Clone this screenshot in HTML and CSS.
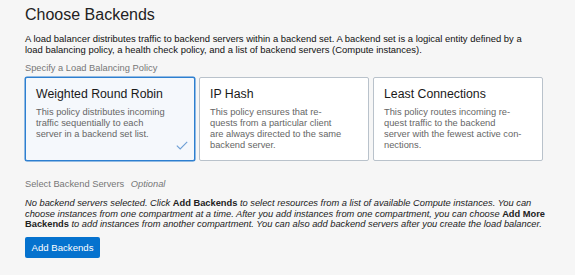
FILE: index.html
```html
<!DOCTYPE html>
<html>
<head>
<meta charset="utf-8">
<link rel="stylesheet" href="styles.css">
</head>
<body>
<div class="page">
  <h1 class="title">Choose Backends</h1>
  <p class="intro">A load balancer distributes traffic to backend servers within a backend set. A backend set is a logical entity defined by a load balancing policy, a health check policy, and a list of backend servers (Compute instances).</p>
  <div class="label">Specify a Load Balancing Policy</div>
  <div class="cards">
    <div class="card selected">
      <div class="card-title">Weighted Round Robin</div>
      <div class="card-text">This policy distributes incoming<br>traffic sequentially to each<br>server in a backend set list.</div>
      <svg class="check" width="12" height="9" viewBox="0 0 12 9"><path d="M0.8 4.6 L4.2 8 L11.2 0.8" fill="none" stroke="#6d9fd6" stroke-width="1.1"/></svg>
    </div>
    <div class="card">
      <div class="card-title">IP Hash</div>
      <div class="card-text">This policy ensures that re-<br>quests from a particular client<br>are always directed to the same<br>backend server.</div>
    </div>
    <div class="card">
      <div class="card-title">Least Connections</div>
      <div class="card-text">This policy routes incoming re-<br>quest traffic to the backend<br>server with the fewest active con-<br>nections.</div>
    </div>
  </div>
  <div class="label2">Select Backend Servers <em class="opt">Optional</em></div>
  <p class="note">No backend servers selected. Click <b>Add Backends</b> to select resources from a list of available Compute instances. You can choose instances from one compartment at a time. After you add instances from one compartment, you can choose <b>Add More Backends</b> to add instances from another compartment. You can also add backend servers after you create the load balancer.</p>
  <button class="btn">Add Backends</button>
</div>
</body>
</html>
```

FILE: styles.css
```css
html, body {
  margin: 0;
  padding: 0;
  background: #f6f6f6;
}
body {
  font-family: "Liberation Sans", Arial, sans-serif;
  color: #222;
}
.page {
  padding: 5px 25px 0 25px;
  width: 520px;
}
.title {
  font-size: 16px;
  font-weight: normal;
  margin: 0;
  line-height: 20px;
  color: #222;
}
.intro {
  font-size: 9.45px;
  line-height: 11px;
  margin: 8px 0 0 0;
  color: #111;
  max-width: 510px;
}
.label {
  font-size: 9.3px;
  color: #777;
  margin-top: 8px;
  line-height: 11px;
}
.cards {
  display: flex;
  gap: 4px;
  margin-top: 3px;
  width: 520px;
}
.card {
  position: relative;
  flex: 0 0 170px;
  box-sizing: border-box;
  height: 84px;
  background: #fff;
  border: 1px solid #b9c2cb;
  border-radius: 2px;
  padding: 8px 6px 8px 10px;
  white-space: nowrap;
}
.card.selected {
  background: #f5f8fc;
  border: 1px solid #2d7fd0;
  box-shadow: 0 0 0 0.5px #2d7fd0;
}
.card-title {
  font-size: 12.3px;
  line-height: 16px;
  color: #1a1a1a;
}
.card-text {
  font-size: 9.3px;
  line-height: 11px;
  color: #666;
  margin-top: 5px;
}
.check {
  position: absolute;
  right: 6px;
  bottom: 10px;
}
.label2 {
  font-size: 9.3px;
  color: #777;
  margin-top: 18px;
  line-height: 11px;
}
.opt {
  margin-left: 4px;
}
.note {
  font-size: 9.3px;
  line-height: 10.6px;
  font-style: italic;
  color: #222;
  margin: 8px 0 0 0;
}
.note b {
  font-style: normal;
  font-weight: bold;
}
.btn {
  display: block;
  margin-top: 7px;
  background: #0572ce;
  color: #fff;
  border: none;
  border-radius: 2px;
  font-family: "Liberation Sans", Arial, sans-serif;
  font-size: 9.6px;
  height: 21px;
  width: 75px;
  padding: 0;
}
```
